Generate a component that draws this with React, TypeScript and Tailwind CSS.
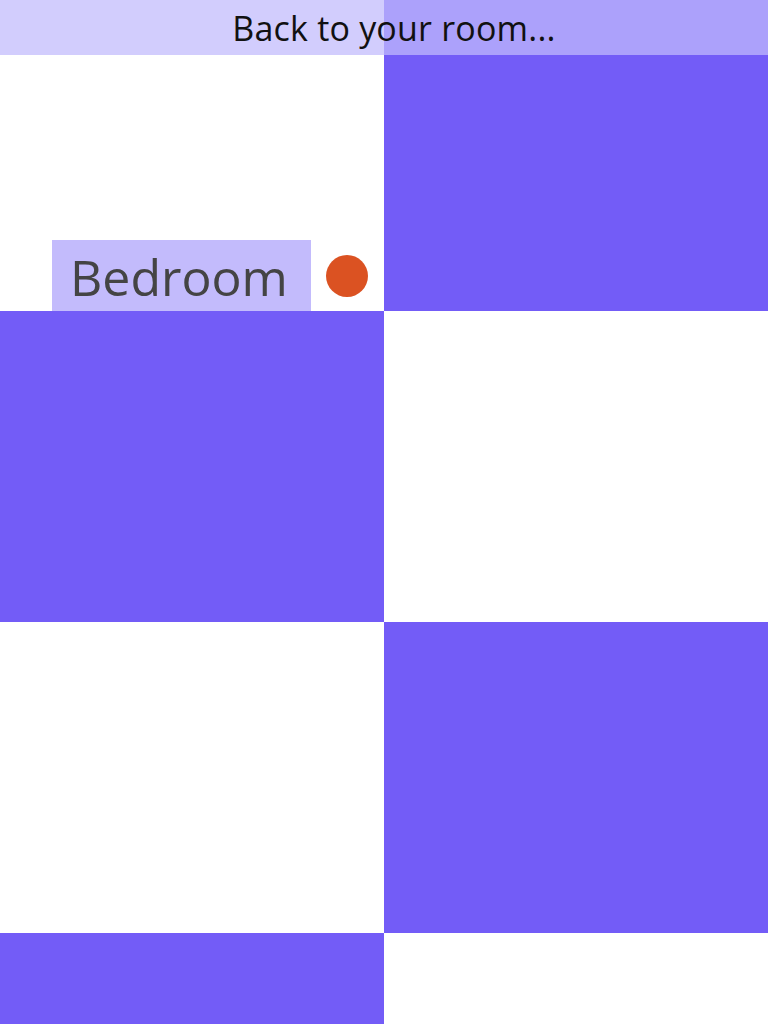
import React from "react";

const cells = [false, true, true, false, false, true, true, false];

export default function App() {
  return (
    <div className="relative w-full bg-white" style={{ fontFamily: '"Open Sans", "Noto Sans", sans-serif' }}>
      <div className="grid grid-cols-2">
        {cells.map((purple, i) => (
          <div
            key={i}
            className={`h-[311px] ${purple ? "bg-[#735cf7]" : "bg-white"} ${i === 0 ? "flex items-end justify-end pr-4" : ""}`}
          >
            {i === 0 && (
              <div className="flex items-center gap-[15px]">
                <div className="w-[259px] h-[71px] bg-[#c3bbfc] pl-[18px] flex items-center">
                  <span className="text-[50px] leading-none text-[#444444] pt-[3px]">Bedroom</span>
                </div>
                <div className="w-[42px] h-[42px] rounded-full bg-[#db5222]" />
              </div>
            )}
          </div>
        ))}
      </div>
      <div className="absolute top-0 left-0 right-0 h-[55px] bg-[rgba(193,186,252,0.73)] flex items-center justify-center pl-[20px]">
        <span className="text-[34px] leading-none text-[#111111] tracking-[0.2px]">Back to your room...</span>
      </div>
    </div>
  );
}
